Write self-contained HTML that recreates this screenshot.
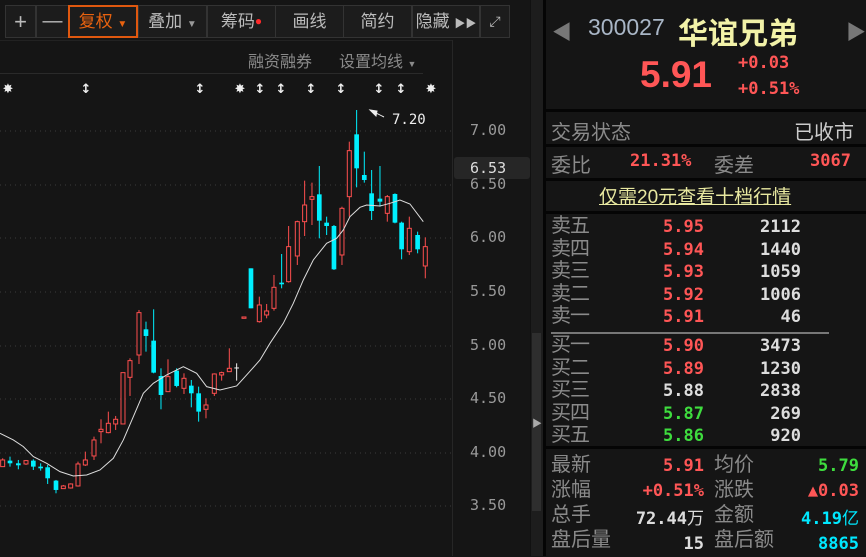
<!DOCTYPE html>
<html><head><meta charset="utf-8"><style>
*{margin:0;padding:0;box-sizing:border-box}
body{width:866px;height:556px;background:#151515;overflow:hidden;position:relative;font-family:"Liberation Sans","Noto Sans CJK SC",sans-serif;color:#999}
.a{position:absolute;white-space:nowrap}
.btn{position:absolute;top:5px;height:33px;background:#1c1c1c;border:1px solid #333;color:#bbb;font-size:17px;text-align:center;line-height:31px}
.m{font-family:"DejaVu Sans Mono","Liberation Mono",monospace}
.hl{position:absolute;left:543px;width:323px;height:3px;background:#050505}
.lb{color:#8a8a8a;font-size:20px}
.r{color:#ff5656}.g{color:#3edc3e}.w{color:#ddd}.c{color:#00e8ff}
.num{font-family:"DejaVu Sans Mono",monospace;font-weight:bold;font-size:17px;text-align:right}
</style></head><body>
<div class="btn" style="left:5px;width:31px;font-size:22px">+</div>
<div class="btn" style="left:36px;width:33px;font-size:20px">—</div>
<div class="btn" style="left:68px;width:70px;border:2px solid #e0580f;color:#e8620f;line-height:29px">复权 <span style="font-size:10px">▼</span></div>
<div class="btn" style="left:138px;width:69px">叠加 <span style="font-size:10px;color:#999">▼</span></div>
<div class="btn" style="left:207px;width:69px">筹码<span style="color:#ff2a2a;font-size:12px;vertical-align:top">●</span></div>
<div class="btn" style="left:275px;width:69px">画线</div>
<div class="btn" style="left:343px;width:69px">简约</div>
<div class="btn" style="left:412px;width:68px">隐藏 <span style="font-size:11px">▶▶</span></div>
<div class="btn" style="left:480px;width:30px;font-size:14px">⤢</div>
<div class="a" style="left:0;top:40px;width:452px;height:1px;background:#222"></div>
<div class="a" style="left:248px;top:48px;font-size:16px;color:#8a8a8a">融资融券</div>
<div class="a" style="left:339px;top:48px;font-size:16px;color:#8a8a8a">设置均线 <span style="font-size:9px">▼</span></div>
<div class="a" style="left:0;top:73px;width:423px;height:1px;background:#2a2a2a"></div>
<div class="a" style="left:452px;top:40px;width:1px;height:516px;background:#262626"></div>
<div class="a" style="left:530px;top:0;width:13px;height:556px;background:#1d1d1d;border-left:1px solid #111"></div>
<div class="a" style="left:532px;top:333px;width:9px;height:178px;background:#2e2e2e"></div>
<div class="a" style="left:532px;top:415px;color:#aaa;font-size:10px">▶</div>

<svg class="a" style="left:0;top:0" width="452" height="556">
<g fill="#eee" font-family="DejaVu Sans" font-size="13" font-weight="bold" text-anchor="middle">
<text x="8" y="93">✸</text><text x="86" y="93">↕</text><text x="200" y="93">↕</text><text x="240" y="93">✸</text><text x="260" y="93">↕</text><text x="281" y="93">↕</text><text x="311" y="93">↕</text><text x="341" y="93">↕</text><text x="379" y="93">↕</text><text x="401" y="93">↕</text><text x="431" y="93">✸</text>
</g>
<g stroke="#3a3a3a" stroke-dasharray="1,4">
<line x1="0" y1="131" x2="452" y2="131"/><line x1="0" y1="185" x2="452" y2="185"/><line x1="0" y1="238" x2="452" y2="238"/><line x1="0" y1="292" x2="452" y2="292"/><line x1="0" y1="346" x2="452" y2="346"/><line x1="0" y1="399" x2="452" y2="399"/><line x1="0" y1="453" x2="452" y2="453"/><line x1="0" y1="506" x2="452" y2="506"/>
</g>
<g id="C" transform="translate(0,100) scale(0.3333)"></g>
<polyline transform="translate(0,100) scale(0.3333)" fill="none" stroke="#ddd" stroke-width="3" points="0,1000 40,1020 70,1040 100,1070 140,1090 180,1115 220,1128 260,1125 300,1110 340,1075 370,1020 400,950 430,880 460,850 500,825 550,800 590,820 620,860 660,870 710,858 740,825 780,780 810,730 850,670 880,610 910,540 940,480 980,430 1010,415 1030,390 1050,350 1080,322 1100,315 1140,318 1170,310 1200,300 1230,312 1270,365"/>
<path d="M370 110 L384 117 M370 110 L376 116 L377 111Z" stroke="#eee" fill="#eee" stroke-width="1"/>
<text x="392" y="124" fill="#eee" font-family="DejaVu Sans Mono" font-size="14">7.20</text>
</svg>
<script>
var d=[[8,'r',1080,1100,1075,1100],[30,'c',1082,1090,1070,1100],[55,'c',1090,1096,1080,1108],[78,'r',1082,1092,1080,1095],[100,'c',1082,1100,1078,1110],[122,'c',1100,1105,1090,1112],[143,'c',1102,1135,1095,1152],[168,'c',1142,1170,1140,1180],[190,'r',1158,1166,1155,1166],[212,'r',1152,1164,1150,1166],[234,'r',1092,1158,1085,1160],[256,'r',1080,1095,1055,1098],[282,'r',1020,1068,1010,1080],[303,'r',988,995,958,1030],[325,'r',970,998,935,1000],[347,'r',958,972,948,990],[369,'r',818,972,818,972],[390,'r',782,832,775,888],[417,'r',638,765,630,792],[438,'c',688,708,665,755],[461,'c',722,818,628,820],[483,'c',828,885,805,928],[504,'r',830,875,778,875],[530,'c',812,858,805,862],[552,'r',835,865,820,882],[574,'c',857,880,840,922],[596,'c',880,935,860,965],[618,'r',915,928,895,955],[643,'r',822,880,820,888],[665,'r',818,825,815,842],[688,'r',805,815,745,815],[710,'w',804,806,790,842],[732,'r',651,653,651,653],[753,'c',505,625,505,625],[778,'r',615,665,590,668],[800,'r',633,645,612,655],[822,'r',562,625,525,632],[845,'c',548,553,462,565],[866,'r',440,545,378,548],[892,'r',365,468,362,495],[914,'r',315,365,242,408],[936,'r',290,298,248,375],[958,'c',283,362,198,415],[980,'c',368,378,350,405],[1002,'c',378,508,375,510],[1026,'r',325,465,320,495],[1048,'r',152,290,125,350],[1070,'c',103,205,30,262],[1093,'c',225,240,155,248],[1115,'c',280,333,210,360],[1140,'c',296,305,198,320],[1162,'r',290,340,285,365],[1185,'c',282,368,280,370],[1205,'c',368,448,365,478],[1228,'r',385,455,350,465],[1253,'c',405,448,395,460],[1276,'r',440,498,412,535]];
var s='';d.forEach(function(k){var col=k[1]=='r'?'#ff4f4f':k[1]=='c'?'#00f0ff':'#eee';
s+='<line x1="'+k[0]+'" y1="'+k[4]+'" x2="'+k[0]+'" y2="'+k[5]+'" stroke="'+col+'" stroke-width="3"/>';
var h=Math.max(k[3]-k[2],4);
if(k[1]=='r')s+='<rect x="'+(k[0]-6)+'" y="'+k[2]+'" width="12" height="'+h+'" fill="#151515" stroke="'+col+'" stroke-width="3"/>';
else if(k[1]=='c')s+='<rect x="'+(k[0]-7)+'" y="'+k[2]+'" width="14" height="'+h+'" fill="'+col+'"/>';
else s+='<line x1="'+(k[0]-7)+'" y1="'+k[2]+'" x2="'+(k[0]+7)+'" y2="'+k[2]+'" stroke="'+col+'" stroke-width="3"/>';});
document.getElementById('C').innerHTML=s;
</script>
<div class="a m" style="left:470px;top:121px;font-size:15px;color:#999">7.00</div>
<div class="a" style="left:454px;top:157px;width:76px;height:22px;background:#262626;border-radius:3px"></div>
<div class="a m" style="left:470px;top:159px;font-size:15px;color:#ddd">6.53</div>
<div class="a m" style="left:470px;top:175px;font-size:15px;color:#999">6.50</div>
<div class="a m" style="left:470px;top:228px;font-size:15px;color:#999">6.00</div>
<div class="a m" style="left:470px;top:282px;font-size:15px;color:#999">5.50</div>
<div class="a m" style="left:470px;top:336px;font-size:15px;color:#999">5.00</div>
<div class="a m" style="left:470px;top:389px;font-size:15px;color:#999">4.50</div>
<div class="a m" style="left:470px;top:443px;font-size:15px;color:#999">4.00</div>
<div class="a m" style="left:470px;top:496px;font-size:15px;color:#999">3.50</div>

<div class="a" style="left:543px;top:0;width:3px;height:556px;background:#050505"></div>
<div class="a" style="left:552px;top:16px;color:#777;font-size:20px">◀</div>
<div class="a" style="left:846px;top:16px;color:#777;font-size:20px">▶</div>
<div class="a" style="left:588px;top:14px;font-size:23px;color:#a9b6c6">300027</div>
<div class="a" style="left:678px;top:9px;font-size:30px;font-weight:bold;color:#f2f2a8">华谊兄弟</div>
<div class="a" style="left:640px;top:54px;font-size:37px;font-weight:bold;color:#ff5656">5.91</div>
<div class="a" style="left:738px;top:53px;font-size:17px;font-weight:bold;color:#ff5656;font-family:'DejaVu Sans Mono',monospace">+0.03</div>
<div class="a" style="left:738px;top:79px;font-size:17px;font-weight:bold;color:#ff5656;font-family:'DejaVu Sans Mono',monospace">+0.51%</div>
<div class="hl" style="top:109px"></div>
<div class="a lb" style="left:551px;top:116px">交易状态</div>
<div class="a" style="left:794px;top:116px;font-size:20px;color:#ccc">已收市</div>
<div class="hl" style="top:144px"></div>
<div class="a lb" style="left:551px;top:149px">委比</div>
<div class="a num r" style="left:630px;top:151px">21.31%</div>
<div class="a lb" style="left:714px;top:149px">委差</div>
<div class="a num r" style="left:810px;top:151px">3067</div>
<div class="hl" style="top:178px"></div>
<div class="a" style="left:599px;top:182px;font-size:19px;color:#e8e8a0;text-decoration:underline">仅需20元查看十档行情</div>
<div class="hl" style="top:211px"></div>

<div class="a lb" style="left:551px;top:215px;line-height:22.5px;letter-spacing:-1px">卖五<br>卖四<br>卖三<br>卖二<br>卖一</div>
<div class="a num" style="left:640px;top:216px;width:64px;line-height:22.5px"><span class="r">5.95<br>5.94<br>5.93<br>5.92<br>5.91</span></div>
<div class="a num w" style="left:720px;top:216px;width:81px;line-height:22.5px">2112<br>1440<br>1059<br>1006<br>46</div>
<div class="a" style="left:551px;top:332px;width:278px;height:2px;background:#777"></div>
<div class="a lb" style="left:551px;top:334px;line-height:22.5px;letter-spacing:-1px">买一<br>买二<br>买三<br>买四<br>买五</div>
<div class="a num" style="left:640px;top:335px;width:64px;line-height:22.5px"><span class="r">5.90<br>5.89</span><br><span class="w">5.88</span><br><span class="g">5.87<br>5.86</span></div>
<div class="a num w" style="left:720px;top:335px;width:81px;line-height:22.5px">3473<br>1230<br>2838<br>269<br>920</div>
<div class="hl" style="top:446px"></div>

<div class="a lb" style="left:551px;top:453px;line-height:25px">最新<br>涨幅<br>总手<br>盘后量</div>
<div class="a num" style="left:600px;top:454px;width:104px;line-height:25px"><span class="r">5.91<br>+0.51%</span><br><span class="w">72.44<span style="font-family:'Noto Sans CJK SC';font-weight:normal">万</span><br>15</span></div>
<div class="a lb" style="left:714px;top:453px;line-height:25px">均价<br>涨跌<br>金额<br>盘后额</div>
<div class="a num" style="left:760px;top:454px;width:99px;line-height:25px"><span class="g">5.79</span><br><span class="r">▲0.03</span><br><span class="c">4.19<span style="font-family:'Noto Sans CJK SC';font-weight:normal">亿</span><br>8865</span></div>
</body></html>
